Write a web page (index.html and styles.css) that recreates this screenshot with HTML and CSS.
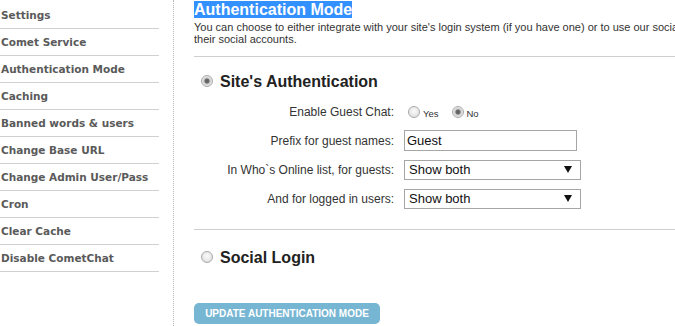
FILE: index.html
```html
<!DOCTYPE html>
<html lang="en">
<head>
    <meta charset="UTF-8">
    <meta name="viewport" content="width=device-width, initial-scale=1.0">
    <title>Authentication Mode</title>
    <link rel="stylesheet" href="styles.css">
</head>
<body>
    <div class="page">
        <!-- Sidebar -->
        <ul class="sidebar">
            <li><a href="#">Settings</a></li>
            <li><a href="#">Comet Service</a></li>
            <li><a href="#">Authentication Mode</a></li>
            <li><a href="#">Caching</a></li>
            <li><a href="#">Banned words &amp; users</a></li>
            <li><a href="#">Change Base URL</a></li>
            <li><a href="#">Change Admin User/Pass</a></li>
            <li><a href="#">Cron</a></li>
            <li><a href="#">Clear Cache</a></li>
            <li><a href="#">Disable CometChat</a></li>
        </ul>

        <!-- Main content -->
        <div class="main">
            <h2><span class="selected">Authentication Mode</span></h2>
            <p class="intro">You can choose to either integrate with your site's login system (if you have one) or to use our social login feature, so that users can log in with<br>their social accounts.</p>

            <div class="section">
                <label class="mode">
                    <input type="radio" name="mode" checked>
                    <span>Site's Authentication</span>
                </label>

                <div class="form-grid">
                    <span class="label">Enable Guest Chat:</span>
                    <div class="choices">
                        <label><input type="radio" name="guest"><span>Yes</span></label>
                        <label><input type="radio" name="guest" checked><span>No</span></label>
                    </div>

                    <span class="label">Prefix for guest names:</span>
                    <input type="text" class="text-field" value="Guest">

                    <span class="label">In Who`s Online list, for guests:</span>
                    <select class="select-field">
                        <option>Show both</option>
                        <option>Show names only</option>
                    </select>

                    <span class="label">And for logged in users:</span>
                    <select class="select-field">
                        <option>Show both</option>
                        <option>Show names only</option>
                    </select>
                </div>
            </div>

            <div class="section social">
                <label class="mode">
                    <input type="radio" name="mode">
                    <span>Social Login</span>
                </label>
            </div>

            <button class="update-btn">Update Authentication Mode</button>
        </div>
    </div>
</body>
</html>
```

FILE: styles.css
```css
/* Basic Reset */
* {
    margin: 0;
    padding: 0;
    box-sizing: border-box;
}

body {
    font-family: Arial, "Liberation Sans", sans-serif;
    color: #333;
    background: #fff;
    overflow: hidden;
}

.page {
    display: flex;
    align-items: stretch;
    height: 326px;
}

/* Sidebar */
.sidebar {
    list-style: none;
    width: 159px;
    flex: none;
    padding-top: 2px;
    margin-right: 14px;
}

.sidebar li {
    border-bottom: 1px solid #d0d0d0;
}

.sidebar a {
    display: block;
    height: 26px;
    line-height: 26px;
    padding-left: 1px;
    font-family: "DejaVu Sans", Verdana, sans-serif;
    font-size: 10.5px;
    font-weight: bold;
    color: #5a5a5a;
    text-decoration: none;
}

/* Main */
.main {
    flex: none;
    width: 720px;
    border-left: 1px dotted #b8b8b8;
    padding-left: 20px;
}

.main h2 {
    margin-top: 1px;
    font-size: 16px;
    line-height: 18px;
    font-weight: bold;
}

.selected {
    background: #3390ff;
    color: #fff;
}

.intro {
    margin-top: 2px;
    font-size: 11px;
    line-height: 12px;
    color: #333;
    white-space: nowrap;
}

.section {
    margin-top: 11px;
    border-top: 1px solid #cfcfcf;
    padding-top: 12px;
}

.section.social {
    margin-top: 20px;
    padding-top: 15px;
}

/* Radios */
input[type="radio"] {
    appearance: none;
    -webkit-appearance: none;
    width: 12px;
    height: 12px;
    border-radius: 50%;
    border: 1px solid #a9a9a9;
    background: radial-gradient(circle at 50% 40%, #fafafa 0%, #e4e4e4 70%, #d0d0d0 100%);
    flex: none;
}

input[type="radio"]:checked {
    background: radial-gradient(circle, #5f5f5f 0, #6a6a6a 2px, #c9c9c9 3px, #ececec 5px);
}

.mode {
    display: flex;
    align-items: center;
    height: 24px;
    padding-left: 7px;
}

.mode span {
    margin-left: 7px;
    margin-top: 2px;
    font-size: 16px;
    font-weight: bold;
    color: #222;
}

/* Form grid */
.form-grid {
    display: grid;
    grid-template-columns: 200px 176px;
    grid-auto-rows: 21px;
    column-gap: 10px;
    row-gap: 8px;
    align-items: center;
    margin-top: 8px;
}

.label {
    text-align: right;
    font-size: 12px;
    color: #333;
}

.choices {
    display: flex;
    align-items: center;
    padding-left: 4px;
}

.choices label {
    display: flex;
    align-items: center;
    margin-right: 13px;
}

.choices span {
    margin-left: 3px;
    margin-top: 4px;
    font-size: 9.5px;
    color: #333;
}

.text-field {
    width: 173px;
    height: 21px;
    padding: 0 2px;
    border: 1px solid #a6a6a6;
    font-family: Arial, "Liberation Sans", sans-serif;
    font-size: 13px;
    color: #111;
}

.select-field {
    appearance: none;
    -webkit-appearance: none;
    width: 177px;
    height: 20px;
    padding: 0 4px;
    border: 1px solid #a6a6a6;
    border-radius: 0;
    background: #fff url("data:image/svg+xml;utf8,<svg xmlns='http://www.w3.org/2000/svg' width='8' height='7'><path d='M0 0h8L4 7z' fill='%23111'/></svg>") no-repeat right 8px center;
    font-family: Arial, "Liberation Sans", sans-serif;
    font-size: 13px;
    color: #111;
}

/* Button */
.update-btn {
    margin-top: 34px;
    width: 186px;
    height: 21px;
    border: none;
    border-radius: 5px;
    background-color: #77b6d3;
    color: #fff;
    font-family: Arial, "Liberation Sans", sans-serif;
    font-size: 10px;
    font-weight: bold;
    text-transform: uppercase;
    cursor: pointer;
}
```
